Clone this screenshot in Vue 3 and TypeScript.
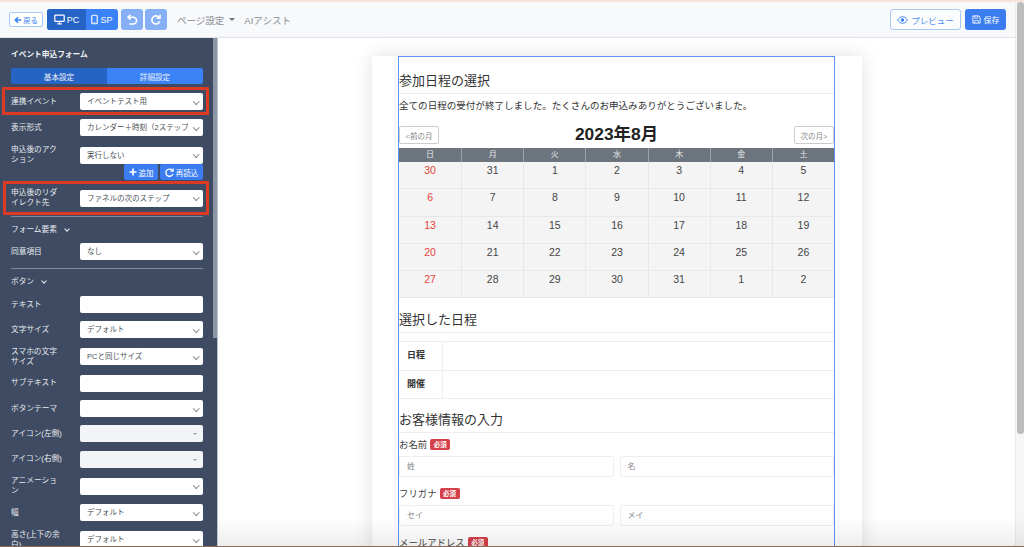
<script setup lang="ts">
interface Row { label: string; value?: string; kind: 'select' | 'input' | 'picker' }
const rowsA: Row[] = [
  { label: '表示形式', value: 'カレンダー＋時刻（2ステップ）', kind: 'select' },
  { label: '申込後のアクション', value: '実行しない', kind: 'select' },
]
const rowsB: Row[] = [
  { label: 'テキスト', kind: 'input' },
  { label: '文字サイズ', value: 'デフォルト', kind: 'select' },
  { label: 'スマホの文字サイズ', value: 'PCと同じサイズ', kind: 'select' },
  { label: 'サブテキスト', kind: 'input' },
  { label: 'ボタンテーマ', kind: 'select' },
  { label: 'アイコン(左側)', kind: 'picker' },
  { label: 'アイコン(右側)', kind: 'picker' },
  { label: 'アニメーション', kind: 'select' },
  { label: '幅', value: 'デフォルト', kind: 'select' },
  { label: '高さ(上下の余白)', value: 'デフォルト', kind: 'select' },
]
const head = ['日', '月', '火', '水', '木', '金', '土']
const weeks = [
  [30, 31, 1, 2, 3, 4, 5],
  [6, 7, 8, 9, 10, 11, 12],
  [13, 14, 15, 16, 17, 18, 19],
  [20, 21, 22, 23, 24, 25, 26],
  [27, 28, 29, 30, 31, 1, 2],
]
</script>

<template>
  <div class="page">
    <div class="topline"></div>
    <header class="bar">
      <button class="back">
        <svg width="8" height="8" viewBox="0 0 10 10"><path d="M9 5H2M5 1.500 1.500 5 5 8.500" fill="none" stroke="currentColor" stroke-width="2"/></svg>
        戻る
      </button>
      <div class="device">
        <span class="dev on">
          <svg width="11" height="11" viewBox="0 0 14 13"><rect x="1" y="1" width="12" height="8" rx="1" fill="none" stroke="#fff" stroke-width="1.600"/><path d="M4 12h6M7 9v3" stroke="#fff" stroke-width="1.600"/></svg>
          PC
        </span>
        <span class="dev">
          <svg width="7" height="11" viewBox="0 0 9 13"><rect x="1" y="1" width="7" height="11" rx="1.200" fill="none" stroke="#fff" stroke-width="1.500"/><path d="M3.500 10.200h2" stroke="#fff"/></svg>
          SP
        </span>
      </div>
      <button class="hist">
        <svg width="12" height="12" viewBox="0 0 12 12"><path d="M3 3.200h4.200a3.400 3.400 0 0 1 0 6.800H3.500" fill="none" stroke="#fff" stroke-width="1.600"/><path d="M4.600 .8 2 3.200l2.600 2.400" fill="none" stroke="#fff" stroke-width="1.600"/></svg>
      </button>
      <button class="hist">
        <svg width="12" height="12" viewBox="0 0 12 12"><path d="M9.600 7.400A4 4 0 1 1 9 3.400" fill="none" stroke="#fff" stroke-width="1.600"/><path d="M10 .8v3.400H6.600" fill="none" stroke="#fff" stroke-width="1.600"/></svg>
      </button>
      <span class="menu">ページ設定<i class="caret"></i></span>
      <span class="menu ai">AIアシスト</span>
      <div class="spacer"></div>
      <button class="preview">
        <svg width="11" height="8" viewBox="0 0 12 9"><path d="M.5 4.500C2 2 4 .8 6 .8s4 1.200 5.500 3.700C10 7 8 8.200 6 8.200S2 7 .5 4.500Z" fill="none" stroke="#3b82f6" stroke-width="1"/><circle cx="6" cy="4.500" r="2" fill="#3b82f6"/></svg>
        プレビュー
      </button>
      <button class="save">
        <svg width="9" height="9" viewBox="0 0 10 10"><path d="M1 1h6.500L9 2.500V9H1Z" fill="none" stroke="#fff"/><path d="M3 1v2.500h3.500V1M3 9V6h4v3" fill="none" stroke="#fff" stroke-width=".8"/></svg>
        保存
      </button>
    </header>

    <div class="body">
      <aside class="side">
        <div class="side-inner">
          <h2 class="title">イベント申込フォーム</h2>
          <div class="tabs">
            <span class="tab">基本設定</span>
            <span class="tab active">詳細設定</span>
          </div>

          <div class="row hl first">
            <label>連携イベント</label>
            <div class="sel"><span>イベントテスト用</span></div>
          </div>

          <div v-for="r in rowsA" :key="r.label" class="row">
            <label>{{ r.label }}</label>
            <div class="sel"><span>{{ r.value }}</span></div>
          </div>

          <div class="actions">
            <button class="act">
              <svg width="8" height="8" viewBox="0 0 8 8"><path d="M4 .5v7M.5 4h7" stroke="#fff" stroke-width="1.600"/></svg>
              追加
            </button>
            <button class="act">
              <svg width="9" height="9" viewBox="0 0 10 10"><path d="M8.800 6.500A4 4 0 1 1 8 2.500" fill="none" stroke="#fff" stroke-width="1.500"/><path d="M9 .5v3H6" fill="none" stroke="#fff" stroke-width="1.500"/></svg>
              再読込
            </button>
          </div>

          <div class="row hl second">
            <label>申込後のリダイレクト先</label>
            <div class="sel"><span>ファネルの次のステップ</span></div>
          </div>

          <hr class="rule first-rule" />
          <div class="section">フォーム要素<i class="chev"></i></div>
          <div class="row agree">
            <label>同意項目</label>
            <div class="sel"><span>なし</span></div>
          </div>
          <hr class="rule second-rule" />
          <div class="section">ボタン<i class="chev"></i></div>

          <div v-for="r in rowsB" :key="r.label" class="row compact">
            <label>{{ r.label }}</label>
            <div v-if="r.kind === 'input'" class="inp"></div>
            <div v-else-if="r.kind === 'picker'" class="pick"><i></i></div>
            <div v-else class="sel"><span>{{ r.value }}</span></div>
          </div>
        </div>
        <div class="scroll"><div class="thumb"></div></div>
      </aside>

      <main class="canvas">
        <div class="paper">
          <div class="form">
            <h3 class="h">参加日程の選択</h3>
            <p class="note">全ての日程の受付が終了しました。たくさんのお申込みありがとうございました。</p>
            <div class="cal-head">
              <button class="nav">&lt;前の月</button>
              <strong class="month">2023年8月</strong>
              <button class="nav">次の月&gt;</button>
            </div>
            <div class="cal-row th">
              <span v-for="d in head" :key="d">{{ d }}</span>
            </div>
            <div v-for="(w, i) in weeks" :key="i" class="cal-row wk">
              <span v-for="(d, j) in w" :key="j" :class="{ sun: j === 0 }">{{ d }}</span>
            </div>

            <h3 class="h chosen">選択した日程</h3>
            <div class="tbl">
              <div class="tr"><b>日程</b><span></span></div>
              <div class="tr"><b>開催</b><span></span></div>
            </div>

            <h3 class="h info">お客様情報の入力</h3>
            <div class="lab">お名前<em>必須</em></div>
            <div class="pair"><div class="fld">姓</div><div class="fld">名</div></div>
            <div class="lab">フリガナ<em>必須</em></div>
            <div class="pair"><div class="fld">セイ</div><div class="fld">メイ</div></div>
            <div class="lab">メールアドレス<em>必須</em></div>
          </div>
        </div>
      </main>
      <div class="page-scroll"><div class="page-thumb"></div></div>
    </div>
    <div class="shade"></div>
    <div class="bottomline"></div>
  </div>
</template>

<style>
html, body { margin: 0; overflow: hidden; background: #fff; }
</style>

<style scoped>
.page {
  height: 547px;
  display: flex;
  flex-direction: column;
  overflow: hidden;
  font-family: "Liberation Sans", "Noto Sans CJK JP", sans-serif;
  text-spacing-trim: space-all;
  color: #333;
  position: relative;
}
.topline { height: 2px; background: #f6e3dc; flex: none; }
.shade {
  position: absolute; left: 218px; right: 0; bottom: 0; height: 30px;
  background: linear-gradient(to bottom, rgba(0, 0, 0, 0), rgba(0, 0, 0, .07)); pointer-events: none;
}
.bottomline { position: absolute; left: 0; right: 0; bottom: 0; height: 1px; background: #8a6a58; }
button { font-family: inherit; cursor: pointer; }
.bar {
  flex: none;
  height: 36px;
  box-sizing: border-box;
  background: #f8f9fb;
  border-bottom: 1px solid #dfe2e6;
  display: flex;
  align-items: center;
  padding: 0 18px 0 9px;
}
.back {
  width: 34px; height: 15px; margin-right: 4px; padding: 0;
  border: 1px solid #a9c8f7; border-radius: 2px; background: #fff; color: #3b82f6;
  font-size: 7.300px; display: flex; align-items: center; justify-content: center; gap: 1px;
}
.device { display: flex; height: 21px; border-radius: 3px; overflow: hidden; background: #3b82f6; }
.dev {
  display: flex; align-items: center; justify-content: center; gap: 2px;
  width: 32px; color: #fff; font-size: 9px;
}
.dev.on { width: 39px; background: #2563c4; }
.hist {
  width: 22px; height: 21px; margin-left: 2px; padding: 0; border: 0; border-radius: 3px;
  background: #86b0f5; display: flex; align-items: center; justify-content: center;
}
.device + .hist { margin-left: 3px; }
.menu { font-size: 9.500px; color: #8a8f96; margin-left: 10px; display: flex; align-items: center; }
.menu.ai { margin-left: 9px; }
.caret {
  margin-left: 5px; width: 0; height: 0;
  border: 3px solid transparent; border-top: 3.500px solid #6c757d; border-bottom: 0;
}
.spacer { flex: 1; }
.preview {
  width: 71px; height: 21px; padding: 0; border: 1px solid #a9c8f7; border-radius: 3px; background: #fbfcfe;
  color: #4f8ef0; font-size: 8.500px; display: flex; align-items: center; justify-content: center; gap: 3px;
}
.save {
  width: 41px; height: 21px; margin-left: 4px; padding: 0; border: 0; border-radius: 3px; background: #3b7cf0;
  color: #fff; font-size: 8px; display: flex; align-items: center; justify-content: center; gap: 3px;
}
.body { flex: 1; min-height: 0; display: flex; }
.side { width: 218px; box-sizing: border-box; flex: none; display: flex; background: #3f4b63; overflow: hidden; border-right: 1px solid #b9c0cc; }
.side-inner { width: 213px; flex: none; box-sizing: border-box; padding: 0 10px 0 11px; color: #eef0f4; }
.title { margin: 11px 0 0; font-size: 7.700px; line-height: 12px; font-weight: 700; color: #f2f3f6; }
.tabs { display: flex; height: 16px; margin-top: 7px; border-radius: 2px; overflow: hidden; }
.tab {
  flex: 1; background: #2563c4; color: #e9eef8; font-size: 7.600px;
  display: flex; align-items: center; justify-content: center;
}
.tab.active { background: #3b82f6; }
.row { display: flex; align-items: center; justify-content: space-between; margin-top: 9px; position: relative; }
.row label { width: 52px; font-size: 7.700px; line-height: 10px; color: #e9ebf0; }
.hl::after {
  content: ""; position: absolute; left: -9px; right: -6px; top: -6px; bottom: -5px;
  border: 3px solid #dc3a22; pointer-events: none;
}
.row.second { margin-top: 8px; }
.row.second::after { left: -8px; top: -7px; bottom: -7px; }
.sel, .inp, .pick {
  width: 123px; height: 17px; box-sizing: border-box; background: #fff; border-radius: 2px;
  color: #4b5157; font-size: 7.500px; line-height: 17px; padding: 0 15px 0 7px;
  position: relative; flex: none;
}
.sel span { display: block; white-space: nowrap; overflow: hidden; }
.sel::after {
  content: ""; position: absolute; right: 5px; top: 5.500px; width: 3.500px; height: 3.500px;
  border-right: 1px solid #888; border-bottom: 1px solid #888; transform: rotate(45deg);
}
.pick { background: #f3f4f7; }
.pick i {
  position: absolute; right: 6px; top: 8px; width: 0; height: 0;
  border: 2px solid transparent; border-top: 2px solid #999; border-bottom: 0;
}
.actions { display: flex; justify-content: flex-end; gap: 2px; margin-top: -1px; position: relative; }
.act {
  height: 16px; padding: 0; border: 0; border-radius: 2px; background: #3b7cf0; color: #fff;
  font-size: 7.500px; display: flex; align-items: center; justify-content: center; gap: 2px; width: 34px;
}
.act + .act { width: 43px; }
.rule { border: 0; height: 1px; background: #7f8a9c; margin: 0; }
.first-rule { margin-top: 8px; }
.second-rule { margin-top: 8px; }
.section {
  font-size: 7.700px; line-height: 12px; color: #e9ebf0; display: flex; align-items: center;
  margin-top: 7px;
}
.chev {
  width: 3px; height: 3px; margin-left: 8px; margin-top: -2px;
  border-right: 1.200px solid #e9ebf0; border-bottom: 1.200px solid #e9ebf0; transform: rotate(45deg);
}
.row.agree { margin-top: 7px; }
.row.compact { margin-top: 8.300px; }
.section + .row.compact { margin-top: 8px; }
.scroll { width: 4px; flex: none; }
.thumb { width: 4px; height: 300px; background: #8d96a5; }
.canvas {
  flex: 1; min-width: 0; background: #fff; display: flex; justify-content: center; overflow: hidden;
  padding-right: 8px;
}
.paper {
  width: 490px; margin-top: 18px; height: 600px; background: #fff;
  box-shadow: 0 0 18px rgba(0, 0, 0, .12); padding: 0 27px 0 26px; box-sizing: border-box; flex: none;
}
.form {
  border: 1px solid #5b93f5; border-bottom: 0; height: 600px; box-sizing: border-box; padding-top: 13px;
}
.h {
  margin: 0; font-size: 13px; font-weight: 400; line-height: 21px; color: #333;
  padding-bottom: 2px; border-bottom: 1px solid #eee;
}
.note { margin: 5px 0 0; font-size: 9.550px; line-height: 14px; color: #333; white-space: nowrap; }
.cal-head { display: flex; align-items: flex-start; justify-content: space-between; margin-top: 11px; height: 24px; }
.nav {
  height: 18px; width: 40px; margin-top: 2px; padding: 0; border: 1px solid #ccc; border-radius: 2px; background: #fff;
  color: #888; font-size: 7.500px;
}
.month { font-size: 17.400px; line-height: 20px; color: #222; font-weight: 700; }
.cal-row { display: grid; grid-template-columns: repeat(7, 1fr); }
.th { height: 14px; background: #6c757d; color: #e8e9eb; font-size: 8px; line-height: 14px; text-align: center; }
.th span { border-left: 1px solid #9aa1a8; }
.th span:first-child { border-left: 0; }
.wk { height: 27.250px; background: #f4f4f4; border-bottom: 1px solid #e8e8e8; box-sizing: border-box; text-align: center; font-size: 10.500px; line-height: 15px; color: #444; }
.wk span { border-left: 1px solid #e8e8e8; padding-top: 1px; }
.wk span:first-child { border-left: 0; }
.sun { color: #e8433a; }
.h.chosen { margin-top: 11px; }
.tbl { margin-top: 8px; }
.tr { display: grid; grid-template-columns: 44px 1fr; height: 28.500px; border-top: 1px solid #eee; box-sizing: border-box; }
.tr:last-child { border-bottom: 1px solid #eee; height: 29px; }
.tr b { font-size: 9px; line-height: 27px; padding-left: 8px; border-right: 1px solid #eee; color: #333; }
.h.info { margin-top: 10px; }
.lab { font-size: 9.400px; line-height: 14px; margin-top: 5px; color: #444; display: flex; align-items: center; }
.lab em {
  font-style: normal; font-weight: 700; font-size: 6.500px; line-height: 11px; color: #fff; background: #d3404a;
  border-radius: 2px; padding: 0 3.500px; margin-left: 3px;
}
.pair { display: grid; grid-template-columns: 1fr 1fr; gap: 6px; margin-top: 4px; }
.fld {
  height: 21px; box-sizing: border-box; border: 1px solid #eee; border-radius: 2px; font-size: 8px; line-height: 19px;
  color: #888; padding-left: 7px;
}
.pair + .lab { margin-top: 10px; }
.page-scroll { width: 9px; position: absolute; right: 0; top: 2px; bottom: 0; background: #f6f6f6; border-left: 1px solid #ececec; box-sizing: border-box; }
.page-thumb { width: 7px; height: 432px; margin-left: .5px; background: #bdbdbd; border-radius: 3px; }
</style>
